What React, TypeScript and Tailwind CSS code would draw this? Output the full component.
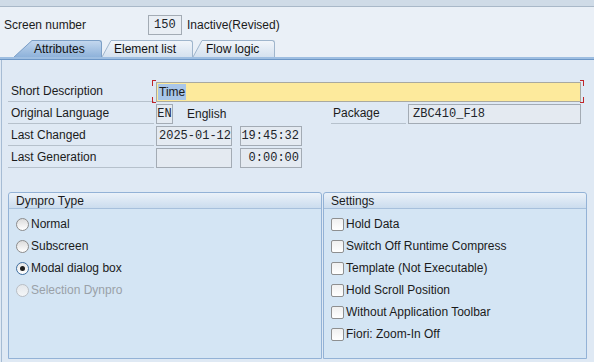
import React from 'react'

type TabProps = {
  label: string
  active?: boolean
  slant: number
  width: number
  pad: number
  id: string
}

function Tab({ label, active = false, slant, width, pad, id }: TabProps) {
  const top = active ? '#c3d7ee' : '#f1f5fa'
  const bottom = active ? '#8eb2da' : '#d4e1ef'
  const stroke = active ? '#7c9fc6' : '#9fb5cc'
  return (
    <div className="flex h-[17px]">
      <svg width={slant} height={17} className="block shrink-0">
        <defs>
          <linearGradient id={id} x1="0" y1="0" x2="0" y2="1">
            <stop offset="0%" stopColor={top} />
            <stop offset="100%" stopColor={bottom} />
          </linearGradient>
        </defs>
        <polygon points={`0,17 ${slant},0 ${slant},17`} fill={`url(#${id})`} />
        <line x1={0} y1={17} x2={slant} y2={0.5} stroke={stroke} strokeWidth={1} />
      </svg>
      <div
        className={
          active
            ? 'flex items-center h-[17px] border-t border-r border-[#7c9fc6] rounded-tr-[3px] bg-gradient-to-b from-[#c3d7ee] to-[#8eb2da] text-[#111]'
            : 'flex items-center h-[17px] border-t border-r border-[#9fb5cc] rounded-tr-[3px] bg-gradient-to-b from-[#f1f5fa] to-[#d4e1ef] text-[#111]'
        }
        style={{ width, paddingLeft: pad }}
      >
        {label}
      </div>
    </div>
  )
}

function Radio({ label, checked = false, disabled = false }: { label: string; checked?: boolean; disabled?: boolean }) {
  return (
    <div className="flex h-[22px] items-center">
      <span
        className={
          checked
            ? 'flex h-[13px] w-[13px] items-center justify-center rounded-full border border-[#3f6e9f] bg-gradient-to-b from-[#e6e6e6] to-[#ffffff]'
            : disabled
              ? 'h-[13px] w-[13px] rounded-full border border-[#b9bec4] bg-gradient-to-b from-[#e3e7eb] to-[#f4f6f8]'
              : 'h-[13px] w-[13px] rounded-full border border-[#8c8c8c] bg-gradient-to-b from-[#dcdcdc] to-[#ffffff]'
        }
      >
        {checked && <span className="h-[5px] w-[5px] rounded-full bg-[#1f1f1f]" />}
      </span>
      <span className={disabled ? 'ml-[2px] text-[#9aa1a8]' : 'ml-[2px]'}>{label}</span>
    </div>
  )
}

function Check({ label }: { label: string }) {
  return (
    <div className="flex h-[22px] items-center">
      <span className="h-[13px] w-[13px] rounded-[2px] border border-[#8e8f90] bg-gradient-to-b from-[#f0f0f0] to-[#ffffff]" />
      <span className="ml-[2px]">{label}</span>
    </div>
  )
}

function GroupHeader({ title }: { title: string }) {
  return (
    <div className="flex h-[16px] items-center border-b border-[#a7c0dc] rounded-t-[3px] bg-gradient-to-b from-[#ebf2f9] to-[#cbdcee] pl-[7px]">
      {title}
    </div>
  )
}

const box = 'h-[20px] border border-[#a3abb4] bg-[#e4eaf1] font-["Liberation_Mono",monospace] text-[12px] text-[#20242a] flex items-center'

export default function App() {
  return (
    <div className="h-[362px] w-[594px] overflow-hidden bg-[#dfe9f4] font-['Liberation_Sans',Arial,sans-serif] text-[12px] text-[#1b1b1b]">
      {/* top band */}
      <div className="h-[7px] border-b border-[#a9b8c8] bg-[#cfdbe7]" />

      {/* header */}
      <div className="h-[50px] bg-[#eaf0f7] pt-[8px]">
        <div className="flex h-[19px] items-center pl-[4px]">
          <span className="w-[144px]">Screen number</span>
          <div className={`${box} h-[19px] w-[34px] pl-[5px] bg-[#e9eef4]`}>150</div>
          <span className="ml-[5px]">Inactive(Revised)</span>
        </div>
        <div className="mt-[6px] flex pl-[14px]">
          <Tab id="t1" label="Attributes" active slant={18} width={70} pad={2} />
          <Tab id="t2" label="Element list" slant={9} width={82} pad={3} />
          <Tab id="t3" label="Flow logic" slant={9} width={73} pad={4} />
        </div>
      </div>
      <div className="h-[3px] border-t-2 border-[#9ebee1] border-b border-b-[#6d97c7] bg-[#9ebee1]" />

      {/* panel */}
      <div className="ml-[1px] h-[302px] border-l border-[#a6bcd4] pt-[21px]">
        {/* row 1 */}
        <div className="relative flex h-[22px] items-start">
          <div className="ml-[6px] flex h-[21px] w-[146px] items-center border-b border-[#b6c1cc] pl-[3px]">Short Description</div>
          <div className="ml-[2px] mt-[1px] flex h-[20px] w-[425px] items-center border border-[#a9a9a0] bg-[#fdea9c] pl-[1px]">
            <span className="bg-[#a9c6e8] px-[1px] leading-[16px]">Time</span>
          </div>
          <span className="absolute left-[150px] top-[-1px] h-[6px] w-[4px] border-l border-t border-[#c0262a]" />
          <span className="absolute left-[150px] top-[16px] h-[6px] w-[4px] border-l border-b border-[#c0262a]" />
          <span className="absolute left-[578px] top-[-1px] h-[6px] w-[4px] border-r border-t border-[#c0262a]" />
          <span className="absolute left-[578px] top-[16px] h-[6px] w-[4px] border-r border-b border-[#c0262a]" />
        </div>

        {/* row 2 */}
        <div className="flex h-[22px] items-start">
          <div className="ml-[6px] flex h-[21px] w-[146px] items-center border-b border-[#b6c1cc] pl-[3px]">Original Language</div>
          <div className={`${box} ml-[2px] mt-[1px] w-[17px] justify-center text-[11px]`}>EN</div>
          <span className="ml-[14px] mt-[1px] flex h-[20px] w-[144px] items-center">English</span>
          <div className="flex h-[21px] w-[75px] items-center border-b border-[#b6c1cc] pl-[2px]">Package</div>
          <div className={`${box} ml-[2px] mt-[1px] w-[173px] pl-[4px] bg-[#dfe6ed]`}>ZBC410_F18</div>
        </div>

        {/* row 3 */}
        <div className="flex h-[22px] items-start">
          <div className="ml-[6px] flex h-[21px] w-[146px] items-center border-b border-[#b6c1cc] pl-[3px]">Last Changed</div>
          <div className={`${box} ml-[2px] mt-[1px] w-[76px] pl-[2px]`}>2025-01-12</div>
          <div className={`${box} ml-[8px] mt-[1px] w-[62px] justify-end pr-[2px]`}>19:45:32</div>
        </div>

        {/* row 4 */}
        <div className="flex h-[22px] items-start">
          <div className="ml-[6px] flex h-[21px] w-[146px] items-center border-b border-[#b6c1cc] pl-[3px]">Last Generation</div>
          <div className={`${box} ml-[2px] mt-[1px] w-[76px]`} />
          <div className={`${box} ml-[8px] mt-[1px] w-[62px] justify-end pr-[2px]`}>0:00:00</div>
        </div>

        {/* groups */}
        <div className="mt-[23px] flex pl-[6px]">
          <div className="h-[167px] w-[314px] rounded-t-[3px] border border-[#93b2d6] bg-[#d4e5f4]">
            <GroupHeader title="Dynpro Type" />
            <div className="pl-[7px] pt-[4px]">
              <Radio label="Normal" />
              <Radio label="Subscreen" />
              <Radio label="Modal dialog box" checked />
              <Radio label="Selection Dynpro" disabled />
            </div>
          </div>
          <div className="ml-[1px] h-[167px] w-[264px] rounded-t-[3px] border border-[#93b2d6] bg-[#d4e5f4]">
            <GroupHeader title="Settings" />
            <div className="pl-[7px] pt-[4px]">
              <Check label="Hold Data" />
              <Check label="Switch Off Runtime Compress" />
              <Check label="Template (Not Executable)" />
              <Check label="Hold Scroll Position" />
              <Check label="Without Application Toolbar" />
              <Check label="Fiori: Zoom-In Off" />
            </div>
          </div>
        </div>
      </div>
    </div>
  )
}
